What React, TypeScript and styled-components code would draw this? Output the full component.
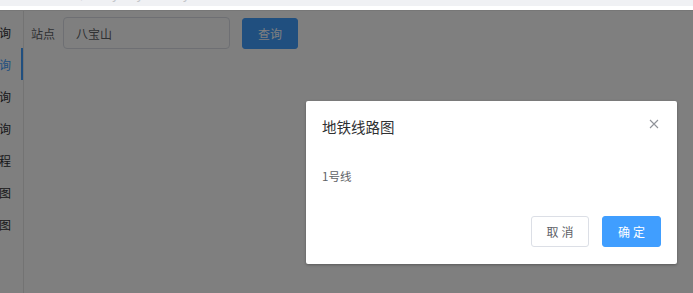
import React from "react"
import styled, { createGlobalStyle } from "styled-components"

const GlobalStyle = createGlobalStyle`
    html, body {
        margin: 0;
        padding: 0;
        height: 100%;
        background: #ffffff;
        font-family: "Noto Sans CJK SC", "Liberation Sans", sans-serif;
    }
    #root {
        min-height: 100%;
    }
`

const Page = styled.div`
    display: flex;
    flex-direction: column;
    height: 293px;
    overflow: hidden;
    position: relative;
`

const TopStrip = styled.div`
    height: 6px;
    background: #f0f1f4;
    overflow: hidden;
    border-bottom: 4px solid #ffffff;
`

const TopText = styled.div`
    margin-top: -13px;
    padding-left: 58px;
    font-size: 13px;
    line-height: 16px;
    color: #c4c6ca;
    font-family: "Liberation Sans", sans-serif;
    white-space: pre;
`

const Body = styled.div`
    flex: 1;
    display: flex;
    border-top: 1px solid #eeeeee;
    position: relative;
`

const Sidebar = styled.ul`
    width: 23px;
    margin: 0;
    padding: 5px 0 0;
    list-style: none;
    border-right: 1px solid #e6e6e6;
    display: flex;
    flex-direction: column;
`

const MenuItem = styled.li<{ active?: boolean }>`
    height: 32px;
    display: flex;
    align-items: center;
    justify-content: flex-end;
    padding-right: 12px;
    font-size: 12px;
    color: ${props => props.active ? "#409eff" : "#303133"};
    white-space: nowrap;
    overflow: hidden;
    position: relative;
    ${props => props.active && `
        &::after {
            content: "";
            position: absolute;
            right: 0;
            top: 0;
            bottom: 0;
            width: 2px;
            background: #409eff;
        }
    `}
`

const Content = styled.div`
    flex: 1;
    padding: 6px 0 0 7px;
`

const SearchRow = styled.div`
    display: flex;
    align-items: center;
`

const Label = styled.label`
    font-size: 12px;
    color: #606266;
    width: 32px;
`

const TextInput = styled.div`
    box-sizing: border-box;
    width: 167px;
    height: 32px;
    border: 1px solid #dcdfe6;
    border-radius: 4px;
    padding: 0 12px;
    display: flex;
    align-items: center;
    font-size: 12px;
    color: #606266;
    margin-right: 12px;
`

const PrimaryButton = styled.button`
    box-sizing: border-box;
    height: 31px;
    width: 56px;
    border: 1px solid #409eff;
    background: #409eff;
    color: #ffffff;
    border-radius: 3px;
    font-size: 12px;
    font-family: inherit;
    padding: 0;
`

const Mask = styled.div`
    position: absolute;
    left: 0;
    right: 0;
    top: 10px;
    bottom: 0;
    background: rgba(0, 0, 0, 0.5);
`

const Dialog = styled.div`
    position: absolute;
    left: 306px;
    top: 101px;
    width: 371px;
    background: #ffffff;
    border-radius: 2px;
    box-shadow: 0 1px 3px rgba(0, 0, 0, 0.3);
    display: flex;
    flex-direction: column;
`

const DialogHeader = styled.div`
    padding: 16px 16px 8px;
    display: flex;
    justify-content: space-between;
    align-items: flex-start;
`

const DialogTitle = styled.span`
    font-size: 14.5px;
    line-height: 20px;
    color: #303133;
`

const CloseButton = styled.span`
    display: flex;
    margin-top: 2px;
    margin-right: 2px;
`

const DialogBody = styled.div`
    padding: 22px 16px 31px;
    font-size: 11.5px;
    line-height: 18px;
    color: #606266;
`

const DialogFooter = styled.div`
    padding: 0 16px 17px;
    display: flex;
    justify-content: flex-end;
    gap: 13px;
`

const DialogButton = styled.button<{ primary?: boolean }>`
    box-sizing: border-box;
    width: ${props => props.primary ? "59px" : "58px"};
    height: 31px;
    border-radius: 3px;
    border: 1px solid ${props => props.primary ? "#409eff" : "#dcdfe6"};
    background: ${props => props.primary ? "#409eff" : "#ffffff"};
    color: ${props => props.primary ? "#ffffff" : "#606266"};
    font-size: 12px;
    font-family: inherit;
    letter-spacing: 3px;
    padding: 0 0 0 3px;
`

const menu = ["站点查询", "线路查询", "换乘查询", "票价查询", "乘车规程", "线路图", "地铁图"]

export default function App() {
    return (
        <>
            <GlobalStyle />
            <Page>
                <TopStrip>
                    <TopText>{"      ,        y     y           y"}</TopText>
                </TopStrip>
                <Body>
                    <Sidebar>
                        {menu.map((item, i) => (
                            <MenuItem key={item} active={i === 1}>{item}</MenuItem>
                        ))}
                    </Sidebar>
                    <Content>
                        <SearchRow>
                            <Label>站点</Label>
                            <TextInput>八宝山</TextInput>
                            <PrimaryButton>查询</PrimaryButton>
                        </SearchRow>
                    </Content>
                </Body>
                <Mask />
                <Dialog>
                    <DialogHeader>
                        <DialogTitle>地铁线路图</DialogTitle>
                        <CloseButton>
                            <svg width="10" height="10" viewBox="0 0 10 10">
                                <path d="M1 1L9 9M9 1L1 9" stroke="#909399" strokeWidth="1.1" />
                            </svg>
                        </CloseButton>
                    </DialogHeader>
                    <DialogBody>1号线</DialogBody>
                    <DialogFooter>
                        <DialogButton>取消</DialogButton>
                        <DialogButton primary>确定</DialogButton>
                    </DialogFooter>
                </Dialog>
            </Page>
        </>
    )
}
